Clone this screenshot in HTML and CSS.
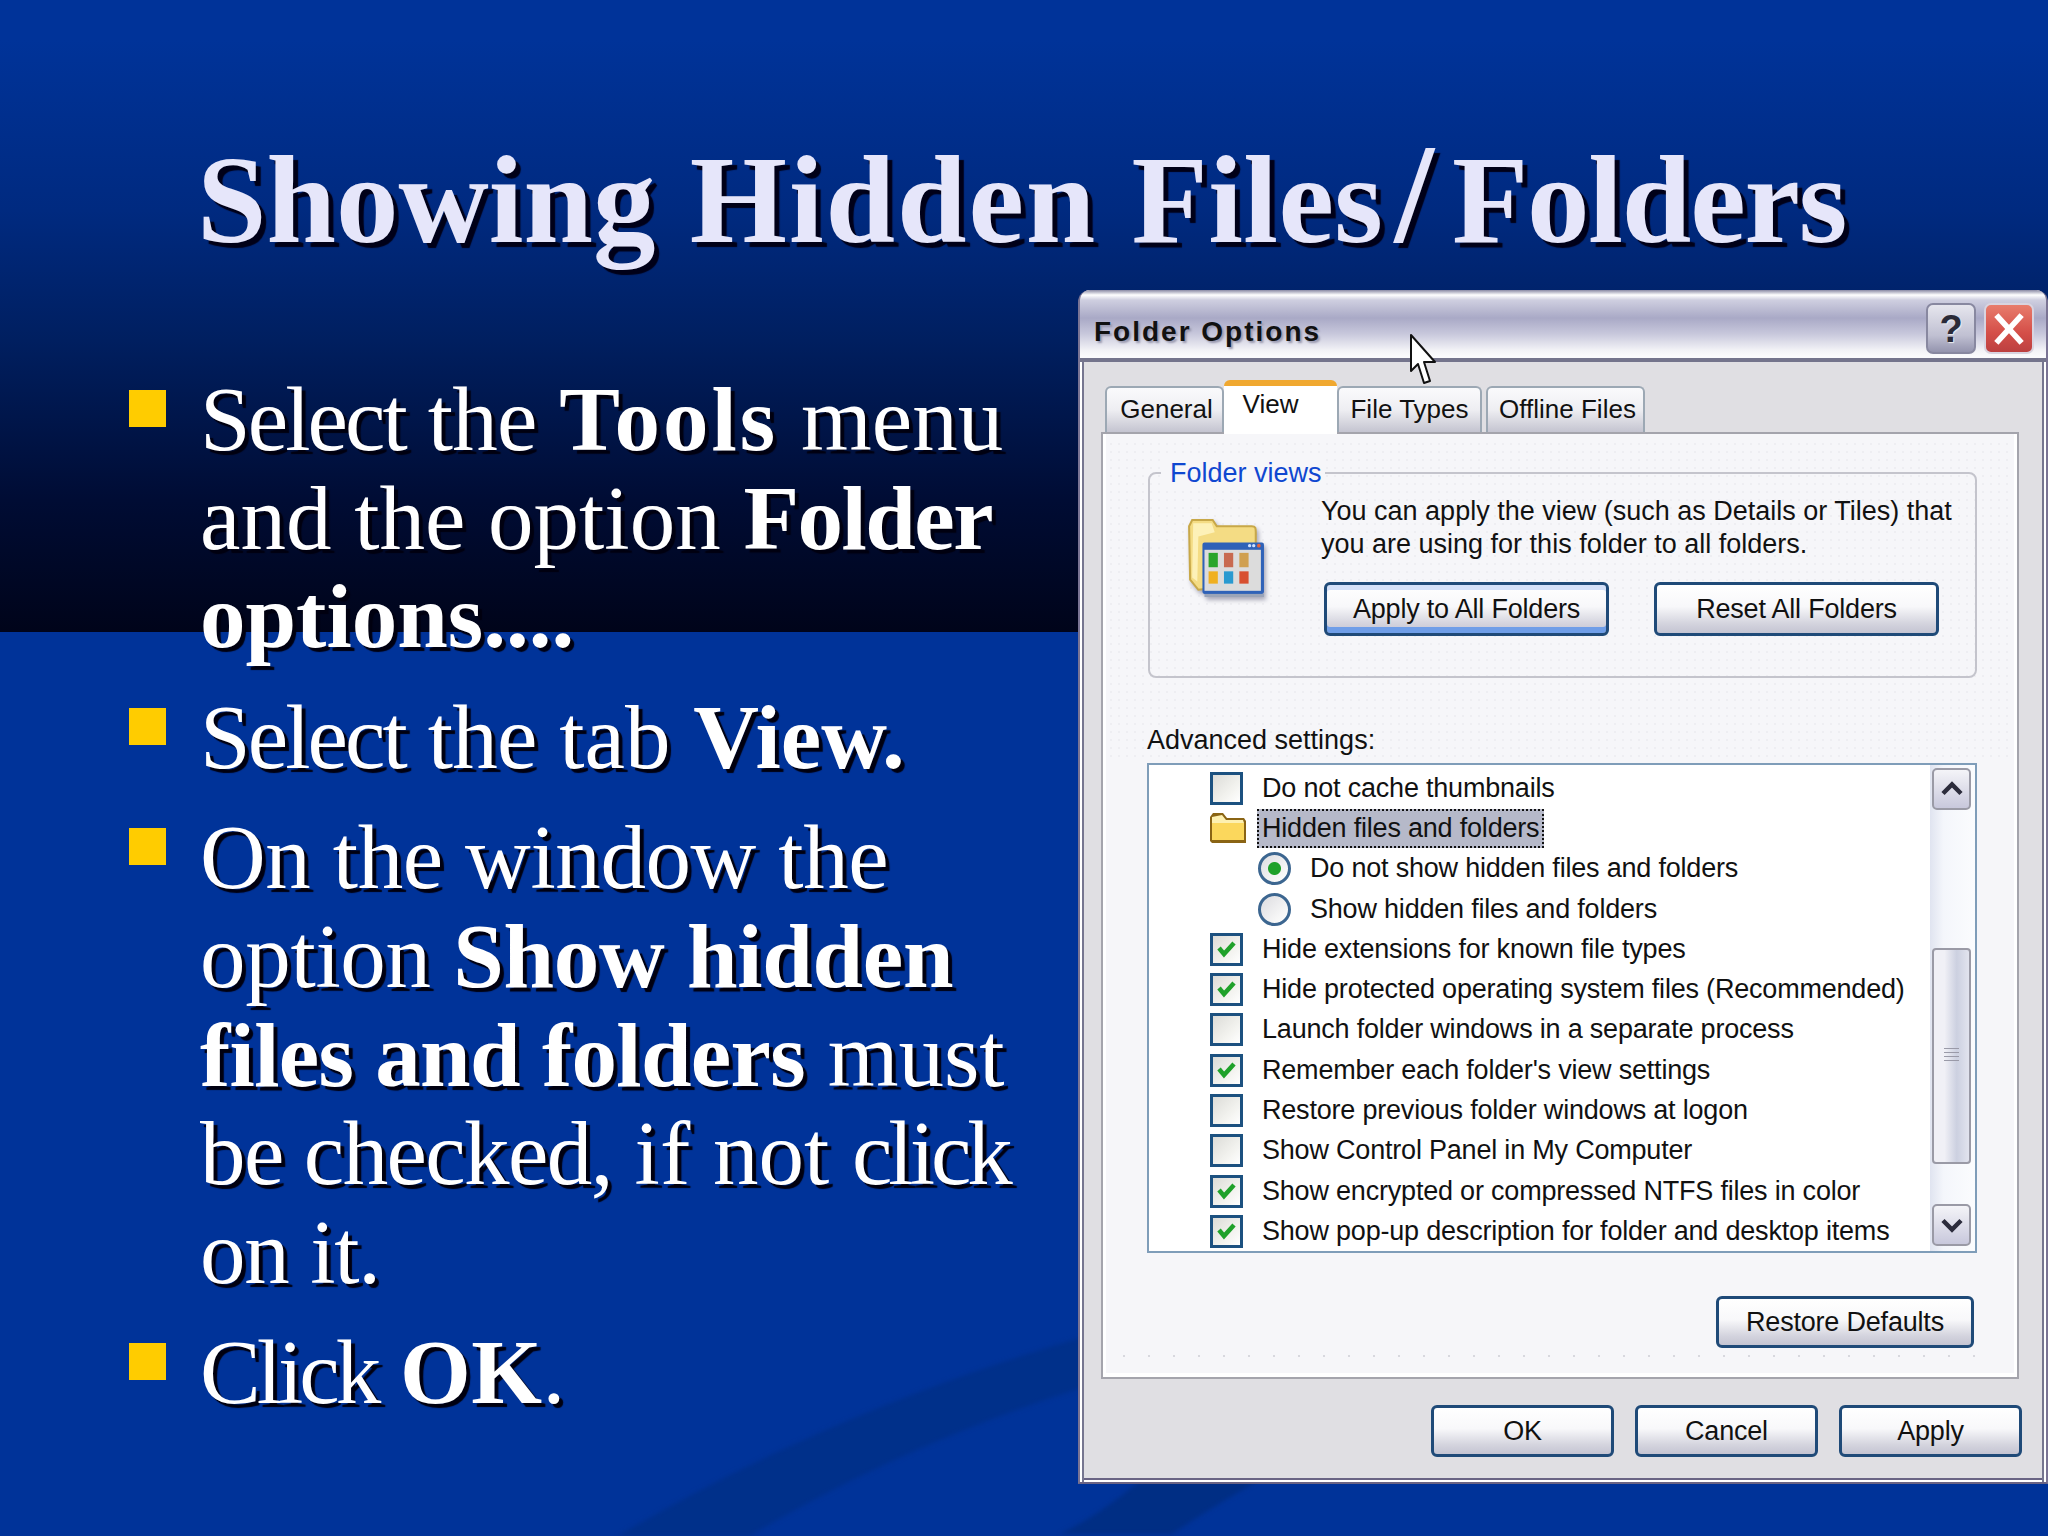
FILE: index.html
```html
<!DOCTYPE html>
<html lang="en">
<head>
<meta charset="utf-8">
<title>Showing Hidden Files/Folders</title>
<link rel="stylesheet" href="styles.css">
</head>
<body>
<main class="slide">
  <svg class="swoosh" viewBox="0 0 2048 1536" aria-hidden="true">
    <path d="M611 1540Q830 1410 1090 1335L1090 1385Q900 1445 743 1540Z" fill="#00308a"/>
    <path d="M1060 1534Q1100 1515 1141 1480L1260 1480Q1215 1505 1172 1534Z" fill="#002e84"/>
  </svg>
  <h1 class="title">Showing <span class="t-hidden">Hidden</span> <span class="t-files">Files</span><span class="t-slash">/</span><span class="t-folders">Folders</span></h1>
  <div class="content">
    <ul class="points">
      <li class="point"><span class="bullet"></span><p class="point-text"><span class="k-select">Select</span> <span class="k-the">the</span> <b class="k-tools">Tools</b> menu<br>and the option <b class="k-folder">Folder</b><br><b>options....</b></p></li>
      <li class="point"><span class="bullet"></span><p class="point-text"><span class="k-select">Select</span> <span class="k-the">the</span> tab <b>View.</b></p></li>
      <li class="point"><span class="bullet"></span><p class="point-text"><span class="k-window">On the window the</span><br><span class="k-option">option <b>Show hidden</b></span><br><b class="k-files">files and folders</b> must<br><span class="k-checked">be checked,</span> if not <span class="k-click">click</span><br><span class="k-onit">on it.</span></p></li>
      <li class="point"><span class="bullet"></span><p class="point-text"><span class="k-click">Click</span> <b class="k-ok">OK</b>.</p></li>
    </ul>

    <section class="dialog">
      <header class="titlebar">
        <span class="titlebar-text">Folder Options</span>
        <span class="win-btn help">?</span>
        <span class="win-btn close">
          <svg viewBox="0 0 30 30" class="close-x"><path d="M5 4L25 26M25 4L5 26" stroke="#fff" stroke-width="4.5" fill="none"/></svg>
        </span>
        <svg class="cursor" viewBox="0 0 28 52" aria-hidden="true"><path d="M2 2L2 38L9 31L15 50L21 48L15 29L26 29Z" fill="#fff" stroke="#111" stroke-width="2" stroke-linejoin="round"/></svg>
      </header>

      <div class="dialog-body">
        <nav class="tabs">
          <span class="tab tab-general">General</span>
          <span class="tab tab-view">View</span>
          <span class="tab tab-types">File Types</span>
          <span class="tab tab-offline">Offline Files</span>
        </nav>

        <div class="panel">
          <div class="group">
            <span class="legend">Folder views</span>
            <svg class="views-icon" viewBox="0 0 76 78" aria-hidden="true">
              <path d="M3 8L6 2L26 2L30 8L64 8C68 8 68 10 68 14L68 64L12 70L4 60Z" fill="#f4dc84" stroke="#c8a848" stroke-width="2"/>
              <path d="M7 5L25 5L28 14L12 18L11 62L6 58Z" fill="#fdf1b8"/>
              <rect x="16" y="24" width="60" height="50" rx="2" fill="#2f62b8"/>
              <rect x="18" y="31" width="55" height="40" fill="#dcdcdc"/>
              <circle cx="62" cy="27" r="1.6" fill="#cfe0ff"/><circle cx="66" cy="27" r="1.6" fill="#cfe0ff"/><circle cx="71" cy="27" r="1.8" fill="#e8643c"/>
              <rect x="22" y="34" width="9" height="14" fill="#2aa52a"/><rect x="37" y="34" width="9" height="14" fill="#c86a50"/><rect x="52" y="34" width="9" height="14" fill="#d0a050"/>
              <rect x="22" y="52" width="9" height="12" fill="#f0b020"/><rect x="37" y="52" width="9" height="12" fill="#2a9ad0"/><rect x="52" y="52" width="9" height="12" fill="#d85030"/>
              <rect x="18" y="74" width="58" height="3" fill="#9aa4b8"/>
            </svg>
            <div class="group-main">
              <p class="group-text">You can apply the view (such as Details or Tiles) that<br>you are using for this folder to all folders.</p>
              <div class="group-actions">
                <button class="btn btn-wide btn-default" type="button">Apply to All Folders</button>
                <button class="btn btn-wide" type="button">Reset All Folders</button>
              </div>
            </div>
          </div>

          <div class="adv-label">Advanced settings:</div>
          <div class="listbox">
            <ul class="rows">
              <li class="row"><span class="check"></span><span>Do not cache thumbnails</span></li>
              <li class="row row-folder">
                <svg class="mini-folder" viewBox="0 0 40 34" aria-hidden="true">
                  <path d="M2 30L2 6L5 2L15 2L19 7L36 7L38 10L38 32L4 32Z" fill="#8a6414"/>
                  <path d="M4 12L36 12L36 29L4 29Z" fill="#fbd75c"/>
                  <path d="M4 6L14 4L18 9L35 9L36 12L4 12Z" fill="#fdf0b0"/>
                </svg>
                <span class="focused">Hidden files and folders</span>
              </li>
              <li class="row row-sub"><span class="radio radio-on"></span><span>Do not show hidden files and folders</span></li>
              <li class="row row-sub"><span class="radio"></span><span>Show hidden files and folders</span></li>
              <li class="row"><span class="check check-on"><svg viewBox="0 0 27 27"><path d="M6 12L11 18L21 7" class="tick"/></svg></span><span>Hide extensions for known file types</span></li>
              <li class="row"><span class="check check-on"><svg viewBox="0 0 27 27"><path d="M6 12L11 18L21 7" class="tick"/></svg></span><span>Hide protected operating system files (Recommended)</span></li>
              <li class="row"><span class="check"></span><span>Launch folder windows in a separate process</span></li>
              <li class="row"><span class="check check-on"><svg viewBox="0 0 27 27"><path d="M6 12L11 18L21 7" class="tick"/></svg></span><span>Remember each folder's view settings</span></li>
              <li class="row"><span class="check"></span><span>Restore previous folder windows at logon</span></li>
              <li class="row"><span class="check"></span><span>Show Control Panel in My Computer</span></li>
              <li class="row"><span class="check check-on"><svg viewBox="0 0 27 27"><path d="M6 12L11 18L21 7" class="tick"/></svg></span><span>Show encrypted or compressed NTFS files in color</span></li>
              <li class="row"><span class="check check-on"><svg viewBox="0 0 27 27"><path d="M6 12L11 18L21 7" class="tick"/></svg></span><span>Show pop-up description for folder and desktop items</span></li>
            </ul>
            <div class="scrollbar">
              <span class="scroll-btn"><svg viewBox="0 0 26 20"><path d="M3 15L13 5L23 15" class="chev"/></svg></span>
              <span class="scroll-thumb"><span class="grip"></span></span>
              <span class="scroll-btn"><svg viewBox="0 0 26 20"><path d="M3 5L13 15L23 5" class="chev"/></svg></span>
            </div>
          </div>

          <div class="restore-row">
            <button class="btn btn-restore" type="button">Restore Defaults</button>
          </div>
        </div>

        <footer class="footer">
          <button class="btn btn-foot" type="button">OK</button>
          <button class="btn btn-foot" type="button">Cancel</button>
          <button class="btn btn-foot" type="button">Apply</button>
        </footer>
      </div>
    </section>
  </div>
</main>
</body>
</html>
```
FILE: styles.css
```css
* { box-sizing: border-box; }
html, body { margin: 0; padding: 0; }
body { width: 2048px; height: 1536px; overflow: hidden; background: #003399; }
p, ul, h1 { margin: 0; padding: 0; }
ul { list-style: none; }

.slide {
  position: relative;
  width: 2048px;
  height: 1536px;
  overflow: hidden;
  background:
    linear-gradient(180deg, #003399 0, #003399 40px, #002a80 210px, #001f60 340px, #000c34 500px, #00041a 632px) top left / 100% 632px no-repeat,
    #003399;
}
.swoosh { position: absolute; left: 0; top: 0; width: 2048px; height: 1536px; filter: blur(2px); }

.title {
  position: relative;
  height: 290px;
  padding: 132px 0 0 197px;
  font: bold 125px/137px "Liberation Serif", "Times New Roman", serif;
  word-spacing: 3px;
  color: #e6e6fa;
  text-shadow: 5px 5px 1px #000018;
  white-space: nowrap;
}
.t-hidden { letter-spacing: 1.9px; }
.t-files { letter-spacing: 0.4px; }
.t-slash { margin: 0 18px 0 11px; font-size: 142px; line-height: 100px; }
.t-folders { letter-spacing: -1.2px; }

.content { position: relative; display: flex; align-items: flex-start; }

.points { width: 1078px; flex: none; padding: 81px 0 0 129px; display: flex; flex-direction: column; gap: 22px; }
.point { display: flex; align-items: flex-start; gap: 34px; }
.bullet { flex: none; width: 37px; height: 37px; margin-top: 19px; background: #ffcc00; }
.point-text {
  font: 91px/98.6px "Liberation Serif", "Times New Roman", serif;
  color: #fff;
  text-shadow: 4px 4px 1px #000010;
  white-space: nowrap;
}
.k-select { letter-spacing: -2.9px; }
.k-the { letter-spacing: -0.8px; }
.k-tools { letter-spacing: 3px; }
.k-folder { letter-spacing: -1.5px; }
.k-window { letter-spacing: -0.4px; }
.k-option { letter-spacing: -0.3px; }
.k-files { letter-spacing: -0.7px; }
.k-checked { letter-spacing: -1.6px; }
.k-click { letter-spacing: -4px; }
.k-onit { letter-spacing: -1.2px; }
.k-ok { letter-spacing: 0.5px; }

/* Dialog */
.dialog {
  flex: none;
  width: 970px;
  height: 1194px;
  background: #e0dfe3;
  border-left: 2px solid #7a7494;
  border-right: 2px solid #7a7494;
  border-bottom: 2px solid #6a6484;
  border-radius: 12px 12px 0 0;
  box-shadow: inset 2px 0 0 #fff, inset 4px 0 0 #767690, inset -2px 0 0 #fff, inset -4px 0 0 #767690, inset 0 -2px 0 #fff, inset 0 -4px 0 #6a6484;
  font: 27px/33px "Liberation Sans", Arial, sans-serif;
  color: #111;
}
.titlebar {
  position: relative;
  height: 72px;
  display: flex;
  align-items: flex-start;
  padding: 13px 12px 0 14px;
  border-radius: 10px 10px 0 0;
  border-bottom: 4px solid #74748c;
  background: linear-gradient(180deg, #8a8aa4 0, #fff 5px, #cfcfe0 10px, #a9a9c6 28px, #c8c8dc 44px, #f2f2f6 60px, #fafafc 66px);
}
.titlebar-text { flex: 1; padding-top: 12px; font-weight: bold; font-size: 28px; letter-spacing: 2px; text-shadow: 2px 2px 2px #9a9ab0; }
.win-btn {
  display: flex;
  align-items: center;
  justify-content: center;
  width: 50px;
  height: 51px;
  border-radius: 7px;
  margin-left: 8px;
}
.help {
  background: linear-gradient(180deg, #e6e6ee, #c0c0d2 65%, #9494ae);
  border: 2px solid #8888a0;
  color: #2a2a38;
  font: bold 38px/46px "Liberation Sans", Arial, sans-serif;
  text-shadow: 1px 1px 1px #eee;
}
.close { background: linear-gradient(180deg, #e87c6c, #d44e48 60%, #bc4040); border: 2px solid #d8d4e0; }
.close-x { width: 38px; height: 38px; }
.cursor { position: absolute; left: 329px; top: 43px; width: 28px; height: 52px; z-index: 2; overflow: visible; }

.dialog-body { padding: 14px 24px 0 21px; }
.tabs { display: flex; align-items: flex-end; height: 56px; padding-left: 4px; }
.tab {
  display: flex;
  justify-content: center;
  height: 46px;
  padding-top: 5px;
  border: 2px solid #9ca8b4;
  border-bottom: 0;
  border-radius: 6px 6px 0 0;
  background: linear-gradient(180deg, #fafafc 0, #eeeef2 50%, #c4c4d0 100%);
  font-size: 26px;
}
.tab-general { width: 119px; padding-left: 4px; }
.tab-view {
  width: 113px;
  height: 54px;
  padding: 2px 20px 0 0;
  position: relative;
  z-index: 1;
  margin-bottom: -2px;
  border: 0;
  border-top: 6px solid #f0a830;
  background: #fff;
}
.tab-types { width: 145px; }
.tab-offline { width: 159px; margin-left: 4px; padding-left: 4px; }

.panel {
  position: relative;
  height: 947px;
  width: 918px;
  border: 2px solid #a4a4ac;
  background: #f6f6f9;
  box-shadow: inset 0 -4px 0 #fff, inset 3px 0 0 #fff, inset -3px 0 0 #fff;
  padding-top: 38px;
}
.panel::before {
  content: "";
  position: absolute;
  left: 6px;
  right: 6px;
  top: 8px;
  height: 320px;
  background-image: radial-gradient(circle at 2px 2px, #eeeef2 1px, transparent 1.5px);
  background-size: 8px 8px;
}
.panel::after {
  content: "";
  position: absolute;
  left: 20px;
  right: 20px;
  top: 921px;
  height: 2px;
  background-image: repeating-linear-gradient(90deg, #d8d8de 0, #d8d8de 2px, transparent 2px, transparent 25px);
}
.group {
  position: relative;
  display: flex;
  width: 829px;
  height: 206px;
  margin-left: 45px;
  border: 2px solid #c4c4cc;
  border-radius: 8px;
}
.legend {
  position: absolute;
  left: 11px;
  top: -17px;
  padding: 0 3px 0 9px;
  background: #f6f6f9;
  color: #0f47d0;
  line-height: 32px;
}
.views-icon { flex: none; width: 78px; height: 80px; margin: 44px 0 0 36px; filter: blur(0.7px) drop-shadow(2px 3px 2px #a8a8b8); }
.group-main { margin-left: 57px; padding-top: 21px; }
.group-text { white-space: nowrap; }
.group-actions { display: flex; gap: 45px; margin-top: 21px; margin-left: 3px; }

.btn {
  display: block;
  padding: 0;
  border: 3px solid #1f4a78;
  border-radius: 6px;
  background: linear-gradient(180deg, #fff 0, #f8f8fa 45%, #d4d4de 80%, #c4c4d2 100%);
  font: 27px/33px "Liberation Sans", Arial, sans-serif;
  letter-spacing: -0.2px;
  color: #111;
  text-align: center;
}
.btn-wide { width: 285px; height: 54px; }
.btn-default { box-shadow: inset 0 5px 0 #d4e0f8, inset 0 -6px 0 #6f9ee8; }
.btn-restore { width: 258px; height: 52px; }
.btn-foot { width: 183px; height: 52px; }

.adv-label { position: relative; margin: 48px 0 0 44px; height: 28px; line-height: 28px; }
.listbox {
  position: relative;
  display: flex;
  width: 830px;
  height: 490px;
  margin: 9px 0 0 44px;
  border: 2px solid #7f9db9;
  background: #fff;
}
.rows { flex: 1; padding-top: 3px; letter-spacing: -0.2px; }
.row { display: flex; align-items: center; gap: 19px; height: 40.3px; padding-left: 61px; white-space: nowrap; }
.row-sub { padding-left: 109px; gap: 19px; }
.row-folder { gap: 9px; padding-left: 59px; }
.check {
  flex: none;
  display: block;
  width: 33px;
  height: 33px;
  border: 3px solid #1c5180;
  background: linear-gradient(135deg, #dcdcd8 0, #f2f2ee 60%, #fff 100%);
}
.check-on svg { display: block; width: 27px; height: 27px; }
.tick { fill: none; stroke: #1fa12a; stroke-width: 4.5; }
.radio {
  flex: none;
  display: block;
  width: 33px;
  height: 33px;
  border-radius: 50%;
  border: 3px solid #3c6690;
  background: linear-gradient(135deg, #dcdce0 0, #f6f6f6 70%, #fff 100%);
}
.radio-on { background: radial-gradient(circle, #1fa12a 0, #1fa12a 6px, transparent 7px), linear-gradient(135deg, #dcdce0 0, #f6f6f6 70%, #fff 100%); }
.mini-folder { flex: none; width: 40px; height: 34px; }
.focused {
  height: 39px;
  line-height: 35px;
  padding: 0 3px;
  background: #b6b9c9;
  border: 2px dotted #111;
}

.scrollbar {
  flex: none;
  width: 45px;
  display: flex;
  flex-direction: column;
  align-items: flex-start;
  padding: 3px 4px 4px 2px;
  background: linear-gradient(90deg, #e0e4f0 0, #f4f6fb 30%, #fbfcfe 100%);
}
.scroll-btn {
  display: flex;
  align-items: center;
  justify-content: center;
  flex: none;
  width: 39px;
  height: 42px;
  border: 2px solid #9a9aa6;
  border-radius: 5px;
  background: linear-gradient(180deg, #f4f4f8, #c8c8dc);
}
.scroll-btn svg { width: 24px; height: 18px; }
.chev { fill: none; stroke: #2c2c3c; stroke-width: 5; }
.scroll-thumb {
  display: flex;
  flex: none;
  align-items: center;
  justify-content: center;
  width: 39px;
  height: 216px;
  margin: 138px 0 40px;
  border: 2px solid #9a9aa6;
  border-radius: 4px;
  background: linear-gradient(90deg, #f0f0f6 0, #f0f0f6 30%, #ccd0e0 65%, #e2e4ee 100%);
}
.grip {
  display: block;
  width: 15px;
  height: 16px;
  background: repeating-linear-gradient(180deg, #9a9aa8 0, #9a9aa8 1.5px, transparent 1.5px, transparent 4px);
}

.restore-row { position: relative; display: flex; justify-content: flex-end; margin-top: 43px; padding-right: 43px; z-index: 1; }

.footer { display: flex; justify-content: flex-end; gap: 21px; margin-top: 26px; }
```
